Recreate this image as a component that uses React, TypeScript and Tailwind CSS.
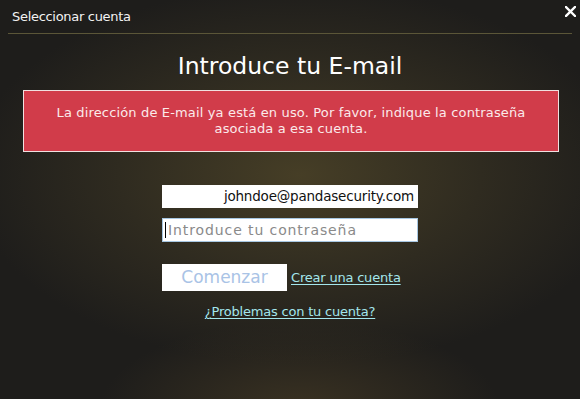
import React from 'react';

const App: React.FC = () => {
  return (
    <div
      className="relative w-[580px] h-[399px] overflow-hidden bg-[#1d1c1a] text-white"
      style={{
        background:
          'radial-gradient(ellipse 330px 190px at 300px 175px, #463e26 0%, #2f2b20 55%, rgba(30,29,27,0) 100%), radial-gradient(ellipse 200px 90px at 300px 410px, #3a3222 0%, rgba(30,29,27,0) 100%), #1e1d1b',
      }}
    >
      <div className="flex items-center justify-between h-[33px] pl-[12px] pr-[4px]">
        <span className="text-[13px] text-[#f2f2f2] font-['DejaVu_Sans',sans-serif] tracking-[-0.3px]">Seleccionar cuenta</span>
        <svg width="11" height="11" viewBox="0 0 11 11" className="-mt-[10px]">
          <path d="M1 1 L10 10 M10 1 L1 10" stroke="#ffffff" strokeWidth="2.4" strokeLinecap="square" />
        </svg>
      </div>
      <div className="mx-[8px] h-px bg-[#5b5638]" />

      <h1 className="mt-[17px] text-center text-[23.5px] leading-[30px] text-white font-['DejaVu_Sans',sans-serif]">
        Introduce tu E-mail
      </h1>

      <div className="ml-[23px] mr-[21px] mt-[9px] h-[62px] border border-[#f0e0e0] bg-[#d13c4a] flex items-center justify-center text-center px-2">
        <p className="text-[13px] leading-[16px] text-[#fbeaea] font-['DejaVu_Sans',sans-serif] tracking-[0.15px]">
          La dirección de E-mail ya está en uso. Por favor, indique la contraseña
          <br />
          asociada a esa cuenta.
        </p>
      </div>

      <div className="flex flex-col items-center mt-[33px] font-['DejaVu_Sans',sans-serif]">
        <div className="w-[256px] flex flex-col gap-[10px]">
          <div className="h-[23px] bg-white flex items-center justify-end pr-[4px] text-[13.5px] text-[#111] tracking-[-0.2px]">
            johndoe@pandasecurity.com
          </div>
          <div className="h-[24px] bg-white border border-[#a7c7e2] flex items-center pl-[2px] text-[14px] text-[#8a8a8a] tracking-[0.9px]">
            <span className="w-px h-[16px] bg-black mr-[2px]" />
            Introduce tu contraseña
          </div>
        </div>

        <div className="w-[256px] mt-[22px] flex items-center gap-[4px]">
          <div className="w-[125px] h-[27px] bg-white flex items-center justify-center text-[17px] text-[#a9c3e6]">
            Comenzar
          </div>
          <a className="text-[13px] text-[#a3e6ec] underline underline-offset-2 tracking-[-0.2px]">Crear una cuenta</a>
        </div>

        <a className="mt-[11px] text-[13px] text-[#a3e6ec] underline underline-offset-2 tracking-[-0.2px]">
          ¿Problemas con tu cuenta?
        </a>
      </div>
    </div>
  );
};

export default App;
